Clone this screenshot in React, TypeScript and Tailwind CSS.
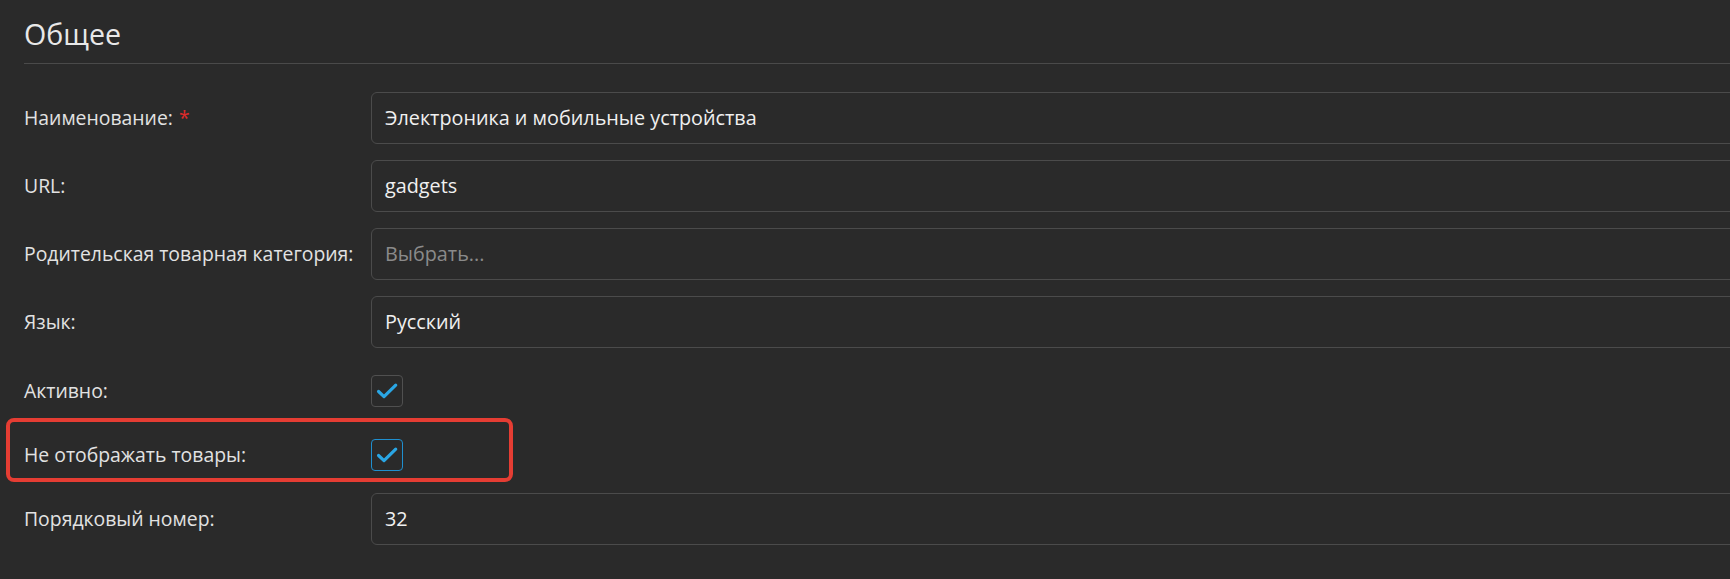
import React from 'react';

interface Field {
    label: string;
    value?: string;
    placeholder?: string;
    required?: boolean;
}

const topFields: Field[] = [
    { label: 'Наименование:', value: 'Электроника и мобильные устройства', required: true },
    { label: 'URL:', value: 'gadgets' },
    { label: 'Родительская товарная категория:', placeholder: 'Выбрать...' },
    { label: 'Язык:', value: 'Русский' },
];

const Check: React.FC<{ focused?: boolean }> = ({ focused }) => (
    <div
        className={`w-[32px] h-[32px] rounded-[4px] border flex items-center justify-center ${
            focused ? 'border-[#1f8fcf]' : 'border-[#505050]'
        }`}
    >
        <svg width="32" height="32" viewBox="0 0 32 32" fill="none">
            <path d="M7 16.5L12.8 22L25.3 9.8" stroke="#2aa6e4" strokeWidth="3.4" strokeLinecap="round" strokeLinejoin="round" />
        </svg>
    </div>
);

const InputRow: React.FC<{ field: Field }> = ({ field }) => (
    <div className="flex items-center h-[52px]">
        <label className="w-[347px] shrink-0 text-[19.4px] text-[#e2e2e2]">
            {field.label}
            {field.required && <span className="text-[#e02b2b] ml-[6px]">*</span>}
        </label>
        <div className="flex-1 h-[52px] border border-[#4b4b4b] rounded-[6px] px-[13px] flex items-center text-[19.8px]">
            {field.value ? (
                <span className="text-[#f0f0f0]">{field.value}</span>
            ) : (
                <span className="text-[#8a8a8a]">{field.placeholder}</span>
            )}
        </div>
    </div>
);

const CheckRow: React.FC<{ label: string; focused?: boolean; className?: string }> = ({ label, focused, className }) => (
    <div className={`flex items-center h-[32px] ${className ?? ''}`}>
        <label className="w-[347px] shrink-0 text-[19.4px] text-[#e2e2e2]">{label}</label>
        <Check focused={focused} />
    </div>
);

export default function App() {
    return (
        <div className="relative w-[1730px] h-[579px] overflow-hidden bg-[#2a2a2a]" style={{ fontFamily: '"Open Sans", "Noto Sans", sans-serif' }}>
            <div className="w-[1800px] pl-6">
                <h2 className="pt-[16px] pb-[11px] text-[28.6px] leading-[36px] text-[#e8e8e8] border-b border-[#4a4a4a]">Общее</h2>
                <div className="mt-[28px] flex flex-col gap-4">
                    {topFields.map((f, i) => (
                        <InputRow key={i} field={f} />
                    ))}
                </div>
                <CheckRow label="Активно:" className="mt-[27px]" />
                <CheckRow label="Не отображать товары:" focused className="mt-[32px]" />
                <div className="mt-[22px]">
                    <InputRow field={{ label: 'Порядковый номер:', value: '32' }} />
                </div>
            </div>
            <div className="absolute left-[6px] top-[418px] w-[507px] h-[64px] border-4 border-[#e53d33] rounded-[8px]" />
        </div>
    );
}
